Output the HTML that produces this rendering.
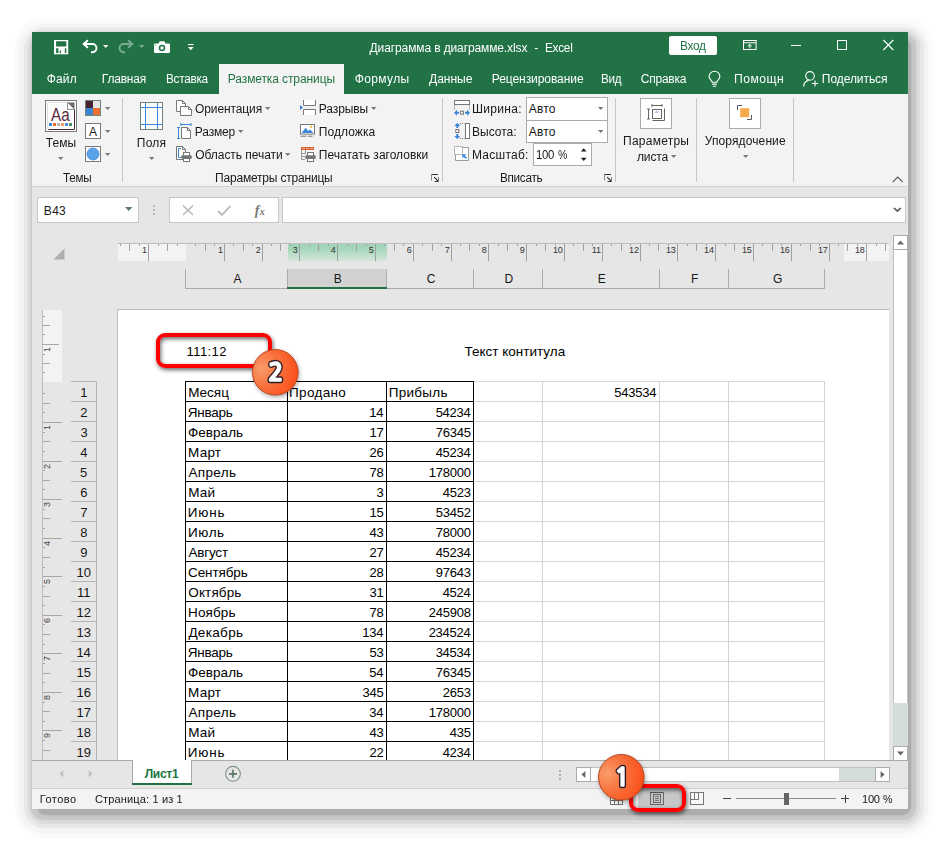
<!DOCTYPE html>
<html lang="ru">
<head>
<meta charset="utf-8">
<title>Диаграмма в диаграмме.xlsx - Excel</title>
<style>
html,body{margin:0;padding:0;background:#fff;}
body{width:940px;height:841px;overflow:hidden;position:relative;font-family:"Liberation Sans",sans-serif;}
#app{position:absolute;left:0;top:0;width:940px;height:841px;overflow:hidden;}
#app div,#app svg,#app span.t{position:absolute;}
#app span.t{white-space:pre;display:block;}
#app svg{overflow:visible;}
#app .layer{left:0;top:0;width:940px;height:841px;}
#app .ui{will-change:transform;}
</style>
</head>
<body>
<div id="app">
<div class="layer">
<div style="left:15px;top:17px;width:918px;height:821px;background:#fbfbfb;border-radius:30px;box-shadow:0 0 2px #fbfbfb;"></div>
<div style="left:19px;top:24px;width:909px;height:809px;background:#f4f4f4;border-radius:25px;box-shadow:0 0 2px #f4f4f4;"></div>
<div style="left:24px;top:28px;width:899.5px;height:800px;background:#e8e8e8;border-radius:21px;box-shadow:0 0 2px #e8e8e8;"></div>
<div style="left:27.5px;top:31px;width:892.0px;height:793px;background:#dcdcdc;border-radius:17px;box-shadow:0 0 2px #dcdcdc;"></div>
<div style="left:31px;top:34px;width:884.5px;height:785.5px;background:#c8c8c8;border-radius:13px;box-shadow:0 0 2px #c8c8c8;"></div>
<div style="left:37px;top:38px;width:874px;height:776.5px;background:#adadad;border-radius:9px;box-shadow:0 0 2px #adadad;"></div>
<div style="left:32px;top:32px;width:876px;height:777px;background:#e6e6e6;"></div>
<div style="left:32px;top:32px;width:876px;height:62px;background:#217346;"></div>
<div style="left:32px;top:94px;width:876px;height:92px;background:#f3f3f3;"></div>
<div style="left:32px;top:186px;width:876px;height:1px;background:#d2d2d2;"></div>
<div style="left:219px;top:64px;width:125px;height:30px;background:#f3f3f3;"></div>
<div style="left:669px;top:36px;width:48px;height:18.5px;background:#fff;border-radius:2px;"></div>
<div style="left:122px;top:98px;width:1px;height:84px;background:#c6c6c6;"></div>
<div style="left:442px;top:98px;width:1px;height:84px;background:#c6c6c6;"></div>
<div style="left:615px;top:98px;width:1px;height:84px;background:#c6c6c6;"></div>
<div style="left:696px;top:98px;width:1px;height:84px;background:#c6c6c6;"></div>
<div style="left:793px;top:98px;width:1px;height:84px;background:#c6c6c6;"></div>
<div style="left:526px;top:97px;width:82px;height:24px;background:#fff;border:1px solid #ababab;box-sizing:border-box;"></div>
<div style="left:526px;top:120px;width:82px;height:23px;background:#fff;border:1px solid #ababab;box-sizing:border-box;"></div>
<div style="left:533px;top:143px;width:59px;height:23px;background:#fff;border:1px solid #ababab;box-sizing:border-box;"></div>
<span class="t" style="left:528.77px;top:99.84px;font:12px/18px &quot;Liberation Sans&quot;, sans-serif;color:#181818;letter-spacing:0.135px;">Авто</span>
<span class="t" style="left:528.77px;top:122.84px;font:12px/18px &quot;Liberation Sans&quot;, sans-serif;color:#181818;letter-spacing:0.135px;">Авто</span>
<div style="left:640px;top:98px;width:32px;height:31px;background:#fff;border:1px solid #ababab;box-sizing:border-box;"></div>
<div style="left:729px;top:98px;width:32px;height:31px;background:#fff;border:1px solid #ababab;box-sizing:border-box;"></div>
<div style="left:37px;top:197px;width:102px;height:26px;background:#fff;border:1px solid #c6c6c6;box-sizing:border-box;"></div>
<span class="t" style="left:43.82px;top:201.84px;font:12px/18px &quot;Liberation Sans&quot;, sans-serif;color:#181818;letter-spacing:0.311px;">B43</span>
<div style="left:169px;top:197px;width:110px;height:26px;background:#fff;border:1px solid #c6c6c6;box-sizing:border-box;"></div>
<div style="left:282px;top:197px;width:624px;height:26px;background:#fff;border:1px solid #c6c6c6;box-sizing:border-box;"></div>
<span class="t" style="left:254.79px;top:199.78px;font:italic bold 14px/21px &quot;Liberation Serif&quot;, serif;color:#777;">f</span>
<span class="t" style="left:259.85px;top:204.12px;font:italic bold 10px/15px &quot;Liberation Serif&quot;, serif;color:#777;">x</span>
<div style="left:118px;top:243px;width:771px;height:1px;background:#bdbdbd;"></div>
<div style="left:118px;top:244px;width:68px;height:17px;background:#f3f3f3;"></div>
<div style="left:844px;top:244px;width:45px;height:17px;background:#f3f3f3;"></div>
<div style="left:288px;top:244px;width:99px;height:17px;background:linear-gradient(#a3d6b9 0%,#a3d6b9 25%,#d6e5dc 100%);"></div>
<div style="left:120px;top:244px;width:1px;height:2px;background:#a0a0a0;"></div>
<div style="left:129px;top:244px;width:1px;height:7px;background:#a0a0a0;"></div>
<div style="left:139px;top:244px;width:1px;height:2px;background:#a0a0a0;"></div>
<div style="left:148px;top:244px;width:1px;height:17px;background:#a0a0a0;"></div>
<div style="left:158px;top:244px;width:1px;height:2px;background:#a0a0a0;"></div>
<div style="left:167px;top:244px;width:1px;height:7px;background:#a0a0a0;"></div>
<div style="left:177px;top:244px;width:1px;height:2px;background:#a0a0a0;"></div>
<div style="left:195px;top:244px;width:1px;height:2px;background:#a0a0a0;"></div>
<div style="left:205px;top:244px;width:1px;height:7px;background:#a0a0a0;"></div>
<div style="left:214px;top:244px;width:1px;height:2px;background:#a0a0a0;"></div>
<div style="left:224px;top:244px;width:1px;height:17px;background:#a0a0a0;"></div>
<div style="left:233px;top:244px;width:1px;height:2px;background:#a0a0a0;"></div>
<div style="left:243px;top:244px;width:1px;height:7px;background:#a0a0a0;"></div>
<div style="left:252px;top:244px;width:1px;height:2px;background:#a0a0a0;"></div>
<div style="left:262px;top:244px;width:1px;height:17px;background:#a0a0a0;"></div>
<div style="left:271px;top:244px;width:1px;height:2px;background:#a0a0a0;"></div>
<div style="left:280px;top:244px;width:1px;height:7px;background:#a0a0a0;"></div>
<div style="left:290px;top:244px;width:1px;height:2px;background:#a0a0a0;"></div>
<div style="left:299px;top:244px;width:1px;height:17px;background:#a0a0a0;"></div>
<div style="left:309px;top:244px;width:1px;height:2px;background:#a0a0a0;"></div>
<div style="left:318px;top:244px;width:1px;height:7px;background:#a0a0a0;"></div>
<div style="left:328px;top:244px;width:1px;height:2px;background:#a0a0a0;"></div>
<div style="left:337px;top:244px;width:1px;height:17px;background:#a0a0a0;"></div>
<div style="left:347px;top:244px;width:1px;height:2px;background:#a0a0a0;"></div>
<div style="left:356px;top:244px;width:1px;height:7px;background:#a0a0a0;"></div>
<div style="left:366px;top:244px;width:1px;height:2px;background:#a0a0a0;"></div>
<div style="left:375px;top:244px;width:1px;height:17px;background:#a0a0a0;"></div>
<div style="left:384px;top:244px;width:1px;height:2px;background:#a0a0a0;"></div>
<div style="left:394px;top:244px;width:1px;height:7px;background:#a0a0a0;"></div>
<div style="left:403px;top:244px;width:1px;height:2px;background:#a0a0a0;"></div>
<div style="left:413px;top:244px;width:1px;height:17px;background:#a0a0a0;"></div>
<div style="left:422px;top:244px;width:1px;height:2px;background:#a0a0a0;"></div>
<div style="left:432px;top:244px;width:1px;height:7px;background:#a0a0a0;"></div>
<div style="left:441px;top:244px;width:1px;height:2px;background:#a0a0a0;"></div>
<div style="left:451px;top:244px;width:1px;height:17px;background:#a0a0a0;"></div>
<div style="left:460px;top:244px;width:1px;height:2px;background:#a0a0a0;"></div>
<div style="left:469px;top:244px;width:1px;height:7px;background:#a0a0a0;"></div>
<div style="left:479px;top:244px;width:1px;height:2px;background:#a0a0a0;"></div>
<div style="left:488px;top:244px;width:1px;height:17px;background:#a0a0a0;"></div>
<div style="left:498px;top:244px;width:1px;height:2px;background:#a0a0a0;"></div>
<div style="left:507px;top:244px;width:1px;height:7px;background:#a0a0a0;"></div>
<div style="left:517px;top:244px;width:1px;height:2px;background:#a0a0a0;"></div>
<div style="left:526px;top:244px;width:1px;height:17px;background:#a0a0a0;"></div>
<div style="left:536px;top:244px;width:1px;height:2px;background:#a0a0a0;"></div>
<div style="left:545px;top:244px;width:1px;height:7px;background:#a0a0a0;"></div>
<div style="left:555px;top:244px;width:1px;height:2px;background:#a0a0a0;"></div>
<div style="left:564px;top:244px;width:1px;height:17px;background:#a0a0a0;"></div>
<div style="left:573px;top:244px;width:1px;height:2px;background:#a0a0a0;"></div>
<div style="left:583px;top:244px;width:1px;height:7px;background:#a0a0a0;"></div>
<div style="left:592px;top:244px;width:1px;height:2px;background:#a0a0a0;"></div>
<div style="left:602px;top:244px;width:1px;height:17px;background:#a0a0a0;"></div>
<div style="left:611px;top:244px;width:1px;height:2px;background:#a0a0a0;"></div>
<div style="left:621px;top:244px;width:1px;height:7px;background:#a0a0a0;"></div>
<div style="left:630px;top:244px;width:1px;height:2px;background:#a0a0a0;"></div>
<div style="left:640px;top:244px;width:1px;height:17px;background:#a0a0a0;"></div>
<div style="left:649px;top:244px;width:1px;height:2px;background:#a0a0a0;"></div>
<div style="left:658px;top:244px;width:1px;height:7px;background:#a0a0a0;"></div>
<div style="left:668px;top:244px;width:1px;height:2px;background:#a0a0a0;"></div>
<div style="left:677px;top:244px;width:1px;height:17px;background:#a0a0a0;"></div>
<div style="left:687px;top:244px;width:1px;height:2px;background:#a0a0a0;"></div>
<div style="left:696px;top:244px;width:1px;height:7px;background:#a0a0a0;"></div>
<div style="left:706px;top:244px;width:1px;height:2px;background:#a0a0a0;"></div>
<div style="left:715px;top:244px;width:1px;height:17px;background:#a0a0a0;"></div>
<div style="left:725px;top:244px;width:1px;height:2px;background:#a0a0a0;"></div>
<div style="left:734px;top:244px;width:1px;height:7px;background:#a0a0a0;"></div>
<div style="left:744px;top:244px;width:1px;height:2px;background:#a0a0a0;"></div>
<div style="left:753px;top:244px;width:1px;height:17px;background:#a0a0a0;"></div>
<div style="left:762px;top:244px;width:1px;height:2px;background:#a0a0a0;"></div>
<div style="left:772px;top:244px;width:1px;height:7px;background:#a0a0a0;"></div>
<div style="left:781px;top:244px;width:1px;height:2px;background:#a0a0a0;"></div>
<div style="left:791px;top:244px;width:1px;height:17px;background:#a0a0a0;"></div>
<div style="left:800px;top:244px;width:1px;height:2px;background:#a0a0a0;"></div>
<div style="left:810px;top:244px;width:1px;height:7px;background:#a0a0a0;"></div>
<div style="left:819px;top:244px;width:1px;height:2px;background:#a0a0a0;"></div>
<div style="left:829px;top:244px;width:1px;height:17px;background:#a0a0a0;"></div>
<div style="left:838px;top:244px;width:1px;height:2px;background:#a0a0a0;"></div>
<div style="left:847px;top:244px;width:1px;height:7px;background:#a0a0a0;"></div>
<div style="left:857px;top:244px;width:1px;height:2px;background:#a0a0a0;"></div>
<div style="left:866px;top:244px;width:1px;height:17px;background:#a0a0a0;"></div>
<div style="left:876px;top:244px;width:1px;height:2px;background:#a0a0a0;"></div>
<div style="left:885px;top:244px;width:1px;height:7px;background:#a0a0a0;"></div>
<span class="t" style="left:141.88px;top:242.88px;font:9px/14px &quot;Liberation Sans&quot;, sans-serif;color:#333;letter-spacing:-0.200px;">1</span>
<span class="t" style="left:217.88px;top:242.88px;font:9px/14px &quot;Liberation Sans&quot;, sans-serif;color:#333;letter-spacing:-0.200px;">1</span>
<span class="t" style="left:255.80px;top:242.88px;font:9px/14px &quot;Liberation Sans&quot;, sans-serif;color:#333;letter-spacing:-0.200px;">2</span>
<span class="t" style="left:292.80px;top:242.88px;font:9px/14px &quot;Liberation Sans&quot;, sans-serif;color:#333;letter-spacing:-0.200px;">3</span>
<span class="t" style="left:330.80px;top:242.88px;font:9px/14px &quot;Liberation Sans&quot;, sans-serif;color:#333;letter-spacing:-0.200px;">4</span>
<span class="t" style="left:368.80px;top:242.88px;font:9px/14px &quot;Liberation Sans&quot;, sans-serif;color:#333;letter-spacing:-0.200px;">5</span>
<span class="t" style="left:406.80px;top:242.88px;font:9px/14px &quot;Liberation Sans&quot;, sans-serif;color:#333;letter-spacing:-0.200px;">6</span>
<span class="t" style="left:444.80px;top:242.88px;font:9px/14px &quot;Liberation Sans&quot;, sans-serif;color:#333;letter-spacing:-0.200px;">7</span>
<span class="t" style="left:481.80px;top:242.88px;font:9px/14px &quot;Liberation Sans&quot;, sans-serif;color:#333;letter-spacing:-0.200px;">8</span>
<span class="t" style="left:519.80px;top:242.88px;font:9px/14px &quot;Liberation Sans&quot;, sans-serif;color:#333;letter-spacing:-0.200px;">9</span>
<span class="t" style="left:552.99px;top:242.88px;font:9px/14px &quot;Liberation Sans&quot;, sans-serif;color:#333;letter-spacing:-0.200px;">10</span>
<span class="t" style="left:591.75px;top:242.88px;font:9px/14px &quot;Liberation Sans&quot;, sans-serif;color:#333;letter-spacing:-0.200px;">11</span>
<span class="t" style="left:629.08px;top:242.88px;font:9px/14px &quot;Liberation Sans&quot;, sans-serif;color:#333;letter-spacing:-0.200px;">12</span>
<span class="t" style="left:665.99px;top:242.88px;font:9px/14px &quot;Liberation Sans&quot;, sans-serif;color:#333;letter-spacing:-0.200px;">13</span>
<span class="t" style="left:704.08px;top:242.88px;font:9px/14px &quot;Liberation Sans&quot;, sans-serif;color:#333;letter-spacing:-0.200px;">14</span>
<span class="t" style="left:741.99px;top:242.88px;font:9px/14px &quot;Liberation Sans&quot;, sans-serif;color:#333;letter-spacing:-0.200px;">15</span>
<span class="t" style="left:779.99px;top:242.88px;font:9px/14px &quot;Liberation Sans&quot;, sans-serif;color:#333;letter-spacing:-0.200px;">16</span>
<span class="t" style="left:817.99px;top:242.88px;font:9px/14px &quot;Liberation Sans&quot;, sans-serif;color:#333;letter-spacing:-0.200px;">17</span>
<span class="t" style="left:854.99px;top:242.88px;font:9px/14px &quot;Liberation Sans&quot;, sans-serif;color:#333;letter-spacing:-0.200px;">18</span>
<div style="left:287px;top:269px;width:100px;height:20px;background:#d2d2d2;"></div>
<div style="left:185px;top:269px;width:1px;height:20px;background:#ababab;"></div>
<div style="left:185px;top:288px;width:102px;height:1px;background:#ababab;"></div>
<span class="t" style="left:233.50px;top:269.84px;font:12px/18px &quot;Liberation Sans&quot;, sans-serif;color:#181818;">A</span>
<div style="left:287px;top:269px;width:1px;height:20px;background:#ababab;"></div>
<span class="t" style="left:333.65px;top:269.84px;font:12px/18px &quot;Liberation Sans&quot;, sans-serif;color:#181818;">B</span>
<div style="left:386px;top:269px;width:1px;height:20px;background:#ababab;"></div>
<div style="left:386px;top:288px;width:87px;height:1px;background:#ababab;"></div>
<span class="t" style="left:426.64px;top:269.84px;font:12px/18px &quot;Liberation Sans&quot;, sans-serif;color:#181818;">C</span>
<div style="left:473px;top:269px;width:1px;height:20px;background:#ababab;"></div>
<div style="left:473px;top:288px;width:69px;height:1px;background:#ababab;"></div>
<span class="t" style="left:504.50px;top:269.84px;font:12px/18px &quot;Liberation Sans&quot;, sans-serif;color:#181818;">D</span>
<div style="left:542px;top:269px;width:1px;height:20px;background:#ababab;"></div>
<div style="left:542px;top:288px;width:117px;height:1px;background:#ababab;"></div>
<span class="t" style="left:597.67px;top:269.84px;font:12px/18px &quot;Liberation Sans&quot;, sans-serif;color:#181818;">E</span>
<div style="left:659px;top:269px;width:1px;height:20px;background:#ababab;"></div>
<div style="left:659px;top:288px;width:69px;height:1px;background:#ababab;"></div>
<span class="t" style="left:691.01px;top:269.84px;font:12px/18px &quot;Liberation Sans&quot;, sans-serif;color:#181818;">F</span>
<div style="left:728px;top:269px;width:1px;height:20px;background:#ababab;"></div>
<div style="left:728px;top:288px;width:96px;height:1px;background:#ababab;"></div>
<span class="t" style="left:773.00px;top:269.84px;font:12px/18px &quot;Liberation Sans&quot;, sans-serif;color:#181818;">G</span>
<div style="left:824px;top:269px;width:1px;height:20px;background:#ababab;"></div>
<div style="left:287px;top:287px;width:100px;height:2px;background:#217346;"></div>
<svg style="left:53px;top:248px;" width="12" height="12" viewBox="0 0 12 12"><path d="M11.5 0.5V11.5H0.5Z" fill="#adadad"/></svg>
<div style="left:117px;top:309px;width:772px;height:452px;background:#fff;border-left:1px solid #bcbcbc;border-top:1px solid #bcbcbc;box-sizing:border-box;"></div>
<div style="left:42px;top:310px;width:20px;height:72px;background:#f3f3f3;"></div>
<div style="left:42px;top:310px;width:1px;height:451px;background:#bdbdbd;"></div>
<div style="left:71px;top:381px;width:26px;height:1px;background:#b4b4b4;"></div>
<span class="t" style="left:80.16px;top:382.50px;font:13px/20px &quot;Liberation Sans&quot;, sans-serif;color:#181818;">1</span>
<div style="left:71px;top:401px;width:26px;height:1px;background:#b4b4b4;"></div>
<span class="t" style="left:80.13px;top:402.50px;font:13px/20px &quot;Liberation Sans&quot;, sans-serif;color:#181818;">2</span>
<div style="left:71px;top:421px;width:26px;height:1px;background:#b4b4b4;"></div>
<span class="t" style="left:80.50px;top:422.50px;font:13px/20px &quot;Liberation Sans&quot;, sans-serif;color:#181818;">3</span>
<div style="left:71px;top:441px;width:26px;height:1px;background:#b4b4b4;"></div>
<span class="t" style="left:80.35px;top:442.50px;font:13px/20px &quot;Liberation Sans&quot;, sans-serif;color:#181818;">4</span>
<div style="left:71px;top:461px;width:26px;height:1px;background:#b4b4b4;"></div>
<span class="t" style="left:80.07px;top:462.50px;font:13px/20px &quot;Liberation Sans&quot;, sans-serif;color:#181818;">5</span>
<div style="left:71px;top:481px;width:26px;height:1px;background:#b4b4b4;"></div>
<span class="t" style="left:80.13px;top:482.50px;font:13px/20px &quot;Liberation Sans&quot;, sans-serif;color:#181818;">6</span>
<div style="left:71px;top:501px;width:26px;height:1px;background:#b4b4b4;"></div>
<span class="t" style="left:80.13px;top:502.50px;font:13px/20px &quot;Liberation Sans&quot;, sans-serif;color:#181818;">7</span>
<div style="left:71px;top:521px;width:26px;height:1px;background:#b4b4b4;"></div>
<span class="t" style="left:80.15px;top:522.50px;font:13px/20px &quot;Liberation Sans&quot;, sans-serif;color:#181818;">8</span>
<div style="left:71px;top:541px;width:26px;height:1px;background:#b4b4b4;"></div>
<span class="t" style="left:80.14px;top:542.50px;font:13px/20px &quot;Liberation Sans&quot;, sans-serif;color:#181818;">9</span>
<div style="left:71px;top:561px;width:26px;height:1px;background:#b4b4b4;"></div>
<span class="t" style="left:76.42px;top:562.50px;font:13px/20px &quot;Liberation Sans&quot;, sans-serif;color:#181818;">10</span>
<div style="left:71px;top:581px;width:26px;height:1px;background:#b4b4b4;"></div>
<span class="t" style="left:76.95px;top:582.50px;font:13px/20px &quot;Liberation Sans&quot;, sans-serif;color:#181818;">11</span>
<div style="left:71px;top:601px;width:26px;height:1px;background:#b4b4b4;"></div>
<span class="t" style="left:76.43px;top:602.50px;font:13px/20px &quot;Liberation Sans&quot;, sans-serif;color:#181818;">12</span>
<div style="left:71px;top:621px;width:26px;height:1px;background:#b4b4b4;"></div>
<span class="t" style="left:76.42px;top:622.50px;font:13px/20px &quot;Liberation Sans&quot;, sans-serif;color:#181818;">13</span>
<div style="left:71px;top:641px;width:26px;height:1px;background:#b4b4b4;"></div>
<span class="t" style="left:76.39px;top:642.50px;font:13px/20px &quot;Liberation Sans&quot;, sans-serif;color:#181818;">14</span>
<div style="left:71px;top:661px;width:26px;height:1px;background:#b4b4b4;"></div>
<span class="t" style="left:76.42px;top:662.50px;font:13px/20px &quot;Liberation Sans&quot;, sans-serif;color:#181818;">15</span>
<div style="left:71px;top:681px;width:26px;height:1px;background:#b4b4b4;"></div>
<span class="t" style="left:76.43px;top:682.50px;font:13px/20px &quot;Liberation Sans&quot;, sans-serif;color:#181818;">16</span>
<div style="left:71px;top:701px;width:26px;height:1px;background:#b4b4b4;"></div>
<span class="t" style="left:76.43px;top:702.50px;font:13px/20px &quot;Liberation Sans&quot;, sans-serif;color:#181818;">17</span>
<div style="left:71px;top:721px;width:26px;height:1px;background:#b4b4b4;"></div>
<span class="t" style="left:76.42px;top:722.50px;font:13px/20px &quot;Liberation Sans&quot;, sans-serif;color:#181818;">18</span>
<div style="left:71px;top:741px;width:26px;height:1px;background:#b4b4b4;"></div>
<span class="t" style="left:76.42px;top:742.50px;font:13px/20px &quot;Liberation Sans&quot;, sans-serif;color:#181818;">19</span>
<div style="left:96px;top:381px;width:1px;height:380px;background:#b4b4b4;"></div>
<div style="left:473px;top:381px;width:352px;height:1px;background:#d4d4d4;"></div>
<div style="left:473px;top:401px;width:352px;height:1px;background:#d4d4d4;"></div>
<div style="left:473px;top:421px;width:352px;height:1px;background:#d4d4d4;"></div>
<div style="left:473px;top:441px;width:352px;height:1px;background:#d4d4d4;"></div>
<div style="left:473px;top:461px;width:352px;height:1px;background:#d4d4d4;"></div>
<div style="left:473px;top:481px;width:352px;height:1px;background:#d4d4d4;"></div>
<div style="left:473px;top:501px;width:352px;height:1px;background:#d4d4d4;"></div>
<div style="left:473px;top:521px;width:352px;height:1px;background:#d4d4d4;"></div>
<div style="left:473px;top:541px;width:352px;height:1px;background:#d4d4d4;"></div>
<div style="left:473px;top:561px;width:352px;height:1px;background:#d4d4d4;"></div>
<div style="left:473px;top:581px;width:352px;height:1px;background:#d4d4d4;"></div>
<div style="left:473px;top:601px;width:352px;height:1px;background:#d4d4d4;"></div>
<div style="left:473px;top:621px;width:352px;height:1px;background:#d4d4d4;"></div>
<div style="left:473px;top:641px;width:352px;height:1px;background:#d4d4d4;"></div>
<div style="left:473px;top:661px;width:352px;height:1px;background:#d4d4d4;"></div>
<div style="left:473px;top:681px;width:352px;height:1px;background:#d4d4d4;"></div>
<div style="left:473px;top:701px;width:352px;height:1px;background:#d4d4d4;"></div>
<div style="left:473px;top:721px;width:352px;height:1px;background:#d4d4d4;"></div>
<div style="left:473px;top:741px;width:352px;height:1px;background:#d4d4d4;"></div>
<div style="left:542px;top:381px;width:1px;height:380px;background:#d4d4d4;"></div>
<div style="left:659px;top:381px;width:1px;height:380px;background:#d4d4d4;"></div>
<div style="left:728px;top:381px;width:1px;height:380px;background:#d4d4d4;"></div>
<div style="left:824px;top:381px;width:1px;height:380px;background:#d4d4d4;"></div>
<div style="left:185px;top:381px;width:289px;height:1px;background:#000;"></div>
<div style="left:185px;top:401px;width:289px;height:1px;background:#000;"></div>
<div style="left:185px;top:421px;width:289px;height:1px;background:#000;"></div>
<div style="left:185px;top:441px;width:289px;height:1px;background:#000;"></div>
<div style="left:185px;top:461px;width:289px;height:1px;background:#000;"></div>
<div style="left:185px;top:481px;width:289px;height:1px;background:#000;"></div>
<div style="left:185px;top:501px;width:289px;height:1px;background:#000;"></div>
<div style="left:185px;top:521px;width:289px;height:1px;background:#000;"></div>
<div style="left:185px;top:541px;width:289px;height:1px;background:#000;"></div>
<div style="left:185px;top:561px;width:289px;height:1px;background:#000;"></div>
<div style="left:185px;top:581px;width:289px;height:1px;background:#000;"></div>
<div style="left:185px;top:601px;width:289px;height:1px;background:#000;"></div>
<div style="left:185px;top:621px;width:289px;height:1px;background:#000;"></div>
<div style="left:185px;top:641px;width:289px;height:1px;background:#000;"></div>
<div style="left:185px;top:661px;width:289px;height:1px;background:#000;"></div>
<div style="left:185px;top:681px;width:289px;height:1px;background:#000;"></div>
<div style="left:185px;top:701px;width:289px;height:1px;background:#000;"></div>
<div style="left:185px;top:721px;width:289px;height:1px;background:#000;"></div>
<div style="left:185px;top:741px;width:289px;height:1px;background:#000;"></div>
<div style="left:185px;top:381px;width:1px;height:380px;background:#000;"></div>
<div style="left:287px;top:381px;width:1px;height:380px;background:#000;"></div>
<div style="left:386px;top:381px;width:1px;height:380px;background:#000;"></div>
<div style="left:473px;top:381px;width:1px;height:380px;background:#000;"></div>
<span class="t" style="left:188.13px;top:383.32px;font:13.5px/20px &quot;Liberation Sans&quot;, sans-serif;color:#000;letter-spacing:0.019px;">Месяц</span>
<span class="t" style="left:289.09px;top:383.32px;font:13.5px/20px &quot;Liberation Sans&quot;, sans-serif;color:#000;letter-spacing:0.314px;">Продано</span>
<span class="t" style="left:388.66px;top:383.32px;font:13.5px/20px &quot;Liberation Sans&quot;, sans-serif;color:#000;letter-spacing:0.289px;">Прибыль</span>
<span class="t" style="left:187.83px;top:403.32px;font:13.5px/20px &quot;Liberation Sans&quot;, sans-serif;color:#000;letter-spacing:-0.275px;">Январь</span>
<span class="t" style="left:369.19px;top:402.50px;font:13px/20px &quot;Liberation Sans&quot;, sans-serif;color:#000;letter-spacing:-0.230px;">14</span>
<span class="t" style="left:435.64px;top:402.50px;font:13px/20px &quot;Liberation Sans&quot;, sans-serif;color:#000;letter-spacing:-0.230px;">54234</span>
<span class="t" style="left:187.98px;top:423.32px;font:13.5px/20px &quot;Liberation Sans&quot;, sans-serif;color:#000;letter-spacing:0.049px;">Февраль</span>
<span class="t" style="left:369.50px;top:422.50px;font:13px/20px &quot;Liberation Sans&quot;, sans-serif;color:#000;letter-spacing:-0.230px;">17</span>
<span class="t" style="left:435.80px;top:422.50px;font:13px/20px &quot;Liberation Sans&quot;, sans-serif;color:#000;letter-spacing:-0.230px;">76345</span>
<span class="t" style="left:188.12px;top:443.32px;font:13.5px/20px &quot;Liberation Sans&quot;, sans-serif;color:#000;letter-spacing:0.210px;">Март</span>
<span class="t" style="left:369.50px;top:442.50px;font:13px/20px &quot;Liberation Sans&quot;, sans-serif;color:#000;letter-spacing:-0.230px;">26</span>
<span class="t" style="left:435.64px;top:442.50px;font:13px/20px &quot;Liberation Sans&quot;, sans-serif;color:#000;letter-spacing:-0.230px;">45234</span>
<span class="t" style="left:188.41px;top:463.32px;font:13.5px/20px &quot;Liberation Sans&quot;, sans-serif;color:#000;letter-spacing:0.374px;">Апрель</span>
<span class="t" style="left:369.50px;top:462.50px;font:13px/20px &quot;Liberation Sans&quot;, sans-serif;color:#000;letter-spacing:-0.230px;">78</span>
<span class="t" style="left:428.80px;top:462.50px;font:13px/20px &quot;Liberation Sans&quot;, sans-serif;color:#000;letter-spacing:-0.230px;">178000</span>
<span class="t" style="left:188.16px;top:483.32px;font:13.5px/20px &quot;Liberation Sans&quot;, sans-serif;color:#000;letter-spacing:0.254px;">Май</span>
<span class="t" style="left:376.50px;top:482.50px;font:13px/20px &quot;Liberation Sans&quot;, sans-serif;color:#000;letter-spacing:-0.230px;">3</span>
<span class="t" style="left:442.80px;top:482.50px;font:13px/20px &quot;Liberation Sans&quot;, sans-serif;color:#000;letter-spacing:-0.230px;">4523</span>
<span class="t" style="left:187.69px;top:503.32px;font:13.5px/20px &quot;Liberation Sans&quot;, sans-serif;color:#000;letter-spacing:0.832px;">Июнь</span>
<span class="t" style="left:369.50px;top:502.50px;font:13px/20px &quot;Liberation Sans&quot;, sans-serif;color:#000;letter-spacing:-0.230px;">15</span>
<span class="t" style="left:435.80px;top:502.50px;font:13px/20px &quot;Liberation Sans&quot;, sans-serif;color:#000;letter-spacing:-0.230px;">53452</span>
<span class="t" style="left:188.12px;top:523.32px;font:13.5px/20px &quot;Liberation Sans&quot;, sans-serif;color:#000;letter-spacing:0.522px;">Июль</span>
<span class="t" style="left:369.50px;top:522.50px;font:13px/20px &quot;Liberation Sans&quot;, sans-serif;color:#000;letter-spacing:-0.230px;">43</span>
<span class="t" style="left:435.80px;top:522.50px;font:13px/20px &quot;Liberation Sans&quot;, sans-serif;color:#000;letter-spacing:-0.230px;">78000</span>
<span class="t" style="left:188.50px;top:543.32px;font:13.5px/20px &quot;Liberation Sans&quot;, sans-serif;color:#000;letter-spacing:-0.214px;">Август</span>
<span class="t" style="left:369.50px;top:542.50px;font:13px/20px &quot;Liberation Sans&quot;, sans-serif;color:#000;letter-spacing:-0.230px;">27</span>
<span class="t" style="left:435.64px;top:542.50px;font:13px/20px &quot;Liberation Sans&quot;, sans-serif;color:#000;letter-spacing:-0.230px;">45234</span>
<span class="t" style="left:187.99px;top:563.32px;font:13.5px/20px &quot;Liberation Sans&quot;, sans-serif;color:#000;letter-spacing:-0.093px;">Сентябрь</span>
<span class="t" style="left:369.50px;top:562.50px;font:13px/20px &quot;Liberation Sans&quot;, sans-serif;color:#000;letter-spacing:-0.230px;">28</span>
<span class="t" style="left:435.80px;top:562.50px;font:13px/20px &quot;Liberation Sans&quot;, sans-serif;color:#000;letter-spacing:-0.230px;">97643</span>
<span class="t" style="left:188.37px;top:583.32px;font:13.5px/20px &quot;Liberation Sans&quot;, sans-serif;color:#000;letter-spacing:0.100px;">Октябрь</span>
<span class="t" style="left:369.50px;top:582.50px;font:13px/20px &quot;Liberation Sans&quot;, sans-serif;color:#000;letter-spacing:-0.230px;">31</span>
<span class="t" style="left:442.64px;top:582.50px;font:13px/20px &quot;Liberation Sans&quot;, sans-serif;color:#000;letter-spacing:-0.230px;">4524</span>
<span class="t" style="left:188.12px;top:603.32px;font:13.5px/20px &quot;Liberation Sans&quot;, sans-serif;color:#000;letter-spacing:0.107px;">Ноябрь</span>
<span class="t" style="left:369.50px;top:602.50px;font:13px/20px &quot;Liberation Sans&quot;, sans-serif;color:#000;letter-spacing:-0.230px;">78</span>
<span class="t" style="left:428.80px;top:602.50px;font:13px/20px &quot;Liberation Sans&quot;, sans-serif;color:#000;letter-spacing:-0.230px;">245908</span>
<span class="t" style="left:188.39px;top:623.32px;font:13.5px/20px &quot;Liberation Sans&quot;, sans-serif;color:#000;letter-spacing:0.332px;">Декабрь</span>
<span class="t" style="left:362.19px;top:622.50px;font:13px/20px &quot;Liberation Sans&quot;, sans-serif;color:#000;letter-spacing:-0.230px;">134</span>
<span class="t" style="left:428.64px;top:622.50px;font:13px/20px &quot;Liberation Sans&quot;, sans-serif;color:#000;letter-spacing:-0.230px;">234524</span>
<span class="t" style="left:187.83px;top:643.32px;font:13.5px/20px &quot;Liberation Sans&quot;, sans-serif;color:#000;letter-spacing:-0.275px;">Январь</span>
<span class="t" style="left:369.50px;top:642.50px;font:13px/20px &quot;Liberation Sans&quot;, sans-serif;color:#000;letter-spacing:-0.230px;">53</span>
<span class="t" style="left:435.64px;top:642.50px;font:13px/20px &quot;Liberation Sans&quot;, sans-serif;color:#000;letter-spacing:-0.230px;">34534</span>
<span class="t" style="left:187.98px;top:663.32px;font:13.5px/20px &quot;Liberation Sans&quot;, sans-serif;color:#000;letter-spacing:0.049px;">Февраль</span>
<span class="t" style="left:369.19px;top:662.50px;font:13px/20px &quot;Liberation Sans&quot;, sans-serif;color:#000;letter-spacing:-0.230px;">54</span>
<span class="t" style="left:435.80px;top:662.50px;font:13px/20px &quot;Liberation Sans&quot;, sans-serif;color:#000;letter-spacing:-0.230px;">76345</span>
<span class="t" style="left:188.12px;top:683.32px;font:13.5px/20px &quot;Liberation Sans&quot;, sans-serif;color:#000;letter-spacing:0.210px;">Март</span>
<span class="t" style="left:362.50px;top:682.50px;font:13px/20px &quot;Liberation Sans&quot;, sans-serif;color:#000;letter-spacing:-0.230px;">345</span>
<span class="t" style="left:442.80px;top:682.50px;font:13px/20px &quot;Liberation Sans&quot;, sans-serif;color:#000;letter-spacing:-0.230px;">2653</span>
<span class="t" style="left:188.41px;top:703.32px;font:13.5px/20px &quot;Liberation Sans&quot;, sans-serif;color:#000;letter-spacing:0.374px;">Апрель</span>
<span class="t" style="left:369.19px;top:702.50px;font:13px/20px &quot;Liberation Sans&quot;, sans-serif;color:#000;letter-spacing:-0.230px;">34</span>
<span class="t" style="left:428.80px;top:702.50px;font:13px/20px &quot;Liberation Sans&quot;, sans-serif;color:#000;letter-spacing:-0.230px;">178000</span>
<span class="t" style="left:188.16px;top:723.32px;font:13.5px/20px &quot;Liberation Sans&quot;, sans-serif;color:#000;letter-spacing:0.254px;">Май</span>
<span class="t" style="left:369.50px;top:722.50px;font:13px/20px &quot;Liberation Sans&quot;, sans-serif;color:#000;letter-spacing:-0.230px;">43</span>
<span class="t" style="left:449.80px;top:722.50px;font:13px/20px &quot;Liberation Sans&quot;, sans-serif;color:#000;letter-spacing:-0.230px;">435</span>
<span class="t" style="left:187.69px;top:743.32px;font:13.5px/20px &quot;Liberation Sans&quot;, sans-serif;color:#000;letter-spacing:0.832px;">Июнь</span>
<span class="t" style="left:369.50px;top:742.50px;font:13px/20px &quot;Liberation Sans&quot;, sans-serif;color:#000;letter-spacing:-0.230px;">22</span>
<span class="t" style="left:442.64px;top:742.50px;font:13px/20px &quot;Liberation Sans&quot;, sans-serif;color:#000;letter-spacing:-0.230px;">4234</span>
<span class="t" style="left:614.34px;top:382.50px;font:13px/20px &quot;Liberation Sans&quot;, sans-serif;color:#000;letter-spacing:-0.230px;">543534</span>
<span class="t" style="left:186.53px;top:341.50px;font:13px/20px &quot;Liberation Sans&quot;, sans-serif;color:#000;letter-spacing:0.431px;">111:12</span>
<span class="t" style="left:464.40px;top:342.32px;font:13.5px/20px &quot;Liberation Sans&quot;, sans-serif;color:#000;letter-spacing:0.007px;">Текст контитула</span>
<div style="left:32px;top:760px;width:861px;height:1px;background:#ababab;"></div>
<div style="left:32px;top:761px;width:876px;height:27px;background:#e6e6e6;"></div>
<div style="left:132px;top:760px;width:60px;height:25px;background:#fff;border-left:1px solid #ababab;border-right:1px solid #ababab;box-sizing:border-box;"></div>
<div style="left:132px;top:783px;width:60px;height:2px;background:#217346;"></div>
<span class="t" style="left:144.67px;top:764.84px;font:bold 12px/18px &quot;Liberation Sans&quot;, sans-serif;color:#217346;letter-spacing:-0.252px;">Лист1</span>
<div style="left:32px;top:788px;width:876px;height:21px;background:#f3f3f3;"></div>
<div style="left:32px;top:788px;width:876px;height:1px;background:#d0d0d0;"></div>
<div style="left:893px;top:235px;width:15px;height:526px;background:#fff;border:1px solid #c0c0c0;box-sizing:border-box;"></div>
<div style="left:893px;top:703px;width:15px;height:44px;background:#d5ddd8;"></div>
<div style="left:893px;top:235px;width:15px;height:15px;background:#fff;border:1px solid #ababab;box-sizing:border-box;"></div>
<div style="left:893px;top:746px;width:15px;height:15px;background:#fff;border:1px solid #ababab;box-sizing:border-box;"></div>
<div style="left:576px;top:767px;width:314px;height:15px;background:#fff;border:1px solid #c0c0c0;box-sizing:border-box;"></div>
<div style="left:839px;top:768px;width:37px;height:13px;background:#d5ddd8;"></div>
<div style="left:576px;top:767px;width:15px;height:15px;background:#fff;border:1px solid #ababab;box-sizing:border-box;"></div>
<div style="left:875px;top:767px;width:15px;height:15px;background:#fff;border:1px solid #ababab;box-sizing:border-box;"></div>
<svg style="left:54px;top:40px;" width="14" height="14" viewBox="0 0 14 14"><path fill-rule="evenodd" fill="#fff" d="M0 0H14.2V14.2H0Z M2.1 1.3V6.5H12.3V1.3Z M2.1 8.3V12.9H4.4V8.3Z M10.8 8.3V12.9H12.3V8.3Z M5.7 10.4V12.9H7.1V10.4Z"/></svg>
<svg style="left:82px;top:40px;" width="16" height="14" viewBox="0 0 16 14"><path d="M2 4.0H10.4A4.1 4.1 0 0 1 10.4 12.2H9" fill="none" stroke="#fff" stroke-width="1.9"/>
<path d="M5.9 0.3L1.7 4.0L5.9 7.7" fill="none" stroke="#fff" stroke-width="2" stroke-linejoin="miter"/></svg>
<svg style="left:103px;top:45px;" width="5.4" height="3.1" viewBox="0 0 5.4 3.1"><path d="M0 0H5.4L2.7 3.1Z" fill="#fff"/></svg>
<svg style="left:118px;top:40px;" width="16" height="14" viewBox="0 0 16 14"><g opacity=".4"><path d="M14 4.0H5.6A4.1 4.1 0 0 0 5.6 12.2H7" fill="none" stroke="#fff" stroke-width="1.9"/>
<path d="M10.1 0.3L14.3 4.0L10.1 7.7" fill="none" stroke="#fff" stroke-width="2" stroke-linejoin="miter"/></g></svg>
<svg style="left:139px;top:45px;" width="5.4" height="3.1" viewBox="0 0 5.4 3.1"><path d="M0 0H5.4L2.7 3.1Z" fill="rgba(255,255,255,.4)"/></svg>
<svg style="left:154px;top:41px;" width="16" height="12" viewBox="0 0 16 12"><path d="M1.2 2.4H4.6L5.8 0.2H10.4L11.6 2.4H14.8Q16 2.4 16 3.6V10.8Q16 12 14.8 12H1.2Q0 12 0 10.8V3.6Q0 2.4 1.2 2.4Z" fill="#fff"/>
<circle cx="8" cy="6.9" r="3.25" fill="#217346"/><rect x="6.5" y="5.4" width="3" height="3" rx=".4" fill="#fff"/>
<circle cx="1.9" cy="4.1" r=".6" fill="#217346"/></svg>
<svg style="left:188px;top:44px;" width="6" height="7" viewBox="0 0 6 7"><rect x="0" y="0" width="5.6" height="1.1" fill="#fff"/><path d="M0 3H5.6L2.8 6.3Z" fill="#fff"/></svg>
<svg style="left:743px;top:40px;" width="14" height="10" viewBox="0 0 14 10"><rect x=".5" y=".5" width="12.6" height="9" fill="none" stroke="#fff" stroke-width="1"/>
<path d="M.5 2.8H13" stroke="#fff" stroke-width="1"/><path d="M6.8 8.4V4.6M4.8 6.3L6.8 4.4L8.8 6.3" fill="none" stroke="#fff" stroke-width="1"/></svg>
<div style="left:791px;top:45px;width:10px;height:1px;background:#fff;"></div>
<div style="left:837px;top:40px;width:10px;height:10px;border:1px solid #fff;box-sizing:border-box;"></div>
<svg style="left:883px;top:40px;" width="11" height="10" viewBox="0 0 11 10"><path d="M0.3 0L10.3 10M10.3 0L0.3 10" stroke="#fff" stroke-width="1.1"/></svg>
<svg style="left:708px;top:71px;" width="13" height="16" viewBox="0 0 13 16"><path d="M4.2 11.2C4.2 9.4 1.1 8.6 1.1 5.6A5.4 5.4 0 0 1 11.9 5.6C11.9 8.6 8.8 9.4 8.8 11.2Z" fill="none" stroke="#fff" stroke-width="1.1"/>
<path d="M4.2 13.1H8.8M4.9 15.2H8.1" stroke="#fff" stroke-width="1.1"/></svg>
<svg style="left:803px;top:71px;" width="16" height="16" viewBox="0 0 16 16"><circle cx="7" cy="4.9" r="4.3" fill="none" stroke="#fff" stroke-width="1.1"/>
<path d="M0.6 15.6C0.9 12.2 3 9.9 5.6 9.4" fill="none" stroke="#fff" stroke-width="1.1"/>
<path d="M12 9.4V15.6M8.9 12.5H15.1" stroke="#fff" stroke-width="1.1"/></svg>
<div style="left:45px;top:100px;width:32px;height:32px;background:#fff;border:1px solid #7a7a7a;box-sizing:border-box;"></div>
<svg style="left:47px;top:102px;" width="28" height="28" viewBox="0 0 28 28"><path d="M.5 .5H20.5L27.5 7.5V27.5H.5Z" fill="#fff" stroke="#e0e0e0" stroke-width="1"/>
<path d="M27.5 7.5V27.5H1.5" fill="none" stroke="#4e2a33" stroke-width="1"/>
<path d="M20.5 .5H27.5V7.5Z" fill="#6a6a6a"/><path d="M20.5 .5V7.5H27.5" fill="none" stroke="#8a8a8a" stroke-width="1"/>
<rect x="2" y="21" width="3" height="3" fill="#3b86d1"/><rect x="6" y="21" width="3" height="3" fill="#ef6a2a"/><rect x="10" y="21" width="3" height="3" fill="#b3b3b3"/>
<rect x="14" y="21" width="3" height="3" fill="#f6a05f"/><rect x="18" y="21" width="3" height="3" fill="#4a92da"/><rect x="22" y="21" width="3" height="3" fill="#4d9064"/></svg>
<span class="t" style="left:51.10px;top:102.24px;font:17.5px/26px &quot;Liberation Sans&quot;, sans-serif;color:#5a2b3a;transform:scaleX(0.87);transform-origin:0 0;">Aa</span>
<svg style="left:58px;top:157px;" width="5.4" height="3.1" viewBox="0 0 5.4 3.1"><path d="M0 0H5.4L2.7 3.1Z" fill="#777"/></svg>
<div style="left:85px;top:100px;width:16px;height:16px;background:#e6e6e6;border:1px solid #6d8579;box-sizing:border-box;"></div>
<div style="left:86px;top:101px;width:7px;height:7px;background:#4a2230;"></div>
<div style="left:86px;top:108px;width:7px;height:7px;background:#3b86d1;"></div>
<div style="left:93px;top:108px;width:7px;height:7px;background:#f0702f;"></div>
<svg style="left:105px;top:107px;" width="5.4" height="3.1" viewBox="0 0 5.4 3.1"><path d="M0 0H5.4L2.7 3.1Z" fill="#777"/></svg>
<div style="left:85px;top:123px;width:16px;height:16px;background:#fff;border:1px solid #7a7a7a;box-sizing:border-box;"></div>
<span class="t" style="left:89.00px;top:122.84px;font:12px/18px &quot;Liberation Sans&quot;, sans-serif;color:#1a1a1a;">A</span>
<svg style="left:105px;top:130px;" width="5.4" height="3.1" viewBox="0 0 5.4 3.1"><path d="M0 0H5.4L2.7 3.1Z" fill="#777"/></svg>
<div style="left:85px;top:146px;width:16px;height:16px;background:#fff;border:1px solid #7a7a7a;box-sizing:border-box;"></div>
<svg style="left:85px;top:146px;" width="16" height="16" viewBox="0 0 16 16"><circle cx="8" cy="8" r="6" fill="#5aa2ea" stroke="#3f86d2" stroke-width=".8"/></svg>
<svg style="left:105px;top:153px;" width="5.4" height="3.1" viewBox="0 0 5.4 3.1"><path d="M0 0H5.4L2.7 3.1Z" fill="#777"/></svg>
<div style="left:140px;top:102px;width:23px;height:28px;background:#fff;border:1px solid #6f8577;box-sizing:border-box;"></div>
<div style="left:145px;top:103px;width:1px;height:26px;background:#3b86d8;"></div>
<div style="left:157px;top:103px;width:1px;height:26px;background:#3b86d8;"></div>
<div style="left:141px;top:107px;width:21px;height:1px;background:#3b86d8;"></div>
<div style="left:141px;top:124px;width:21px;height:1px;background:#3b86d8;"></div>
<svg style="left:149px;top:157px;" width="5.4" height="3.1" viewBox="0 0 5.4 3.1"><path d="M0 0H5.4L2.7 3.1Z" fill="#777"/></svg>
<svg style="left:176px;top:100px;" width="16" height="16" viewBox="0 0 16 16"><path d="M.5 .5H6.5L9.5 3.5V11.5H.5Z" fill="#fff" stroke="#777"/><path d="M6.5 .5V3.5H9.5" fill="none" stroke="#777"/>
<path d="M4.5 6.5H12.5L15.5 9.5V15.5H4.5Z" fill="#fff" stroke="#777"/><path d="M12.5 6.5V9.5H15.5" fill="none" stroke="#777"/></svg>
<svg style="left:265px;top:107px;" width="5.4" height="3.1" viewBox="0 0 5.4 3.1"><path d="M0 0H5.4L2.7 3.1Z" fill="#777"/></svg>
<svg style="left:178px;top:124px;" width="14" height="15" viewBox="0 0 14 15"><path d="M3 .5H13M3 -1V2M13 -1V2" stroke="#3b86d8" fill="none"/><path d="M.5 3.5V14.5M-1 3.5H2M-1 14.5H2" stroke="#3b86d8" fill="none"/>
<path d="M3.5 3.5H9.5L12.5 6.5V14.5H3.5Z" fill="#fff" stroke="#777"/><path d="M9.5 3.5V6.5H12.5" fill="none" stroke="#777"/></svg>
<svg style="left:238px;top:130px;" width="5.4" height="3.1" viewBox="0 0 5.4 3.1"><path d="M0 0H5.4L2.7 3.1Z" fill="#777"/></svg>
<svg style="left:176px;top:146px;" width="16" height="16" viewBox="0 0 16 16"><path d="M.5 .5H6.5L9.5 3.5V13.5H.5Z" fill="#fff" stroke="#777"/><path d="M6.5 .5V3.5H9.5" fill="none" stroke="#777"/>
<path d="M5 2.5H2.5V11.5H5" fill="none" stroke="#3b86d8"/>
<rect x="7.5" y="6.5" width="6" height="4" fill="#fff" stroke="#777"/><rect x="5.3" y="9.3" width="10.4" height="3.6" rx="1" fill="#757575"/>
<rect x="7.5" y="12.5" width="6" height="3" fill="#fff" stroke="#777"/></svg>
<svg style="left:285px;top:153px;" width="5.4" height="3.1" viewBox="0 0 5.4 3.1"><path d="M0 0H5.4L2.7 3.1Z" fill="#777"/></svg>
<svg style="left:300px;top:100px;" width="16" height="15" viewBox="0 0 16 15"><path d="M3.5 0V5.5H15.5V0" fill="#fff" stroke="#777"/><path d="M3.5 15V9.5H15.5V15" fill="#fff" stroke="#777"/>
<path d="M0 5L3 7.5L0 10Z" fill="#3b86d8"/></svg>
<svg style="left:371px;top:107px;" width="5.4" height="3.1" viewBox="0 0 5.4 3.1"><path d="M0 0H5.4L2.7 3.1Z" fill="#777"/></svg>
<svg style="left:300px;top:124px;" width="15" height="13" viewBox="0 0 15 13"><rect x=".5" y=".5" width="14" height="9.6" fill="#fff" stroke="#777"/>
<path d="M1.5 9L5.6 3.8L8.2 7L10 5.4L13.6 9Z" fill="#3b86d8"/><circle cx="11.2" cy="2.8" r="1.3" fill="#f7c64f"/>
<path d="M.5 12.2H6.5M8 12.2H12.5" stroke="#777"/></svg>
<svg style="left:301px;top:147px;" width="15" height="15" viewBox="0 0 15 15"><rect x="0" y="0" width="13" height="3" fill="#d5622f"/><path d="M1 1.5H4M5 1.5H8M9 1.5H12" stroke="#f3b79a" stroke-width=".8"/>
<path d="M.5 3V12.5H4M.5 6.5H5M.5 9.5H4M4.5 3V7" fill="none" stroke="#9a9a9a"/>
<rect x="6.5" y="5.5" width="6" height="4" fill="#fff" stroke="#777"/><rect x="4.3" y="8.3" width="10.4" height="3.8" rx="1" fill="#757575"/>
<rect x="6.5" y="11.5" width="6" height="3" fill="#fff" stroke="#777"/></svg>
<svg style="left:431px;top:174px;" width="8" height="8" viewBox="0 0 8 8"><path d="M.5 6.6V.5" fill="none" stroke="#8a8a8a"/><path d="M.5 .5H7" fill="none" stroke="#333"/><path d="M3.2 3.2L7.2 7.2" fill="none" stroke="#222" stroke-width="1.1"/><path d="M7.5 3.2V7.5" fill="none" stroke="#777"/><path d="M7.5 7.5H3.6" fill="none" stroke="#333"/></svg>
<svg style="left:604px;top:174px;" width="8" height="8" viewBox="0 0 8 8"><path d="M.5 6.6V.5" fill="none" stroke="#8a8a8a"/><path d="M.5 .5H7" fill="none" stroke="#333"/><path d="M3.2 3.2L7.2 7.2" fill="none" stroke="#222" stroke-width="1.1"/><path d="M7.5 3.2V7.5" fill="none" stroke="#777"/><path d="M7.5 7.5H3.6" fill="none" stroke="#333"/></svg>
<svg style="left:454px;top:100px;" width="16" height="16" viewBox="0 0 16 16"><rect x=".5" y=".5" width="15" height="4" fill="#fff" stroke="#777"/>
<path d="M.5 5.5V10M15.5 5.5V10" stroke="#777" stroke-dasharray="1 1"/>
<path d="M0 12.7L3 9.7V11.7H5V13.7H3V15.7Z" fill="#3b86d8"/><path d="M16 12.7L13 9.7V11.7H11V13.7H13V15.7Z" fill="#3b86d8"/>
<rect x="6.5" y="11.2" width="3" height="3" fill="#fff" stroke="#777"/></svg>
<svg style="left:454px;top:123px;" width="16" height="16" viewBox="0 0 16 16"><rect x="11.5" y=".5" width="4" height="15" fill="#fff" stroke="#777"/>
<path d="M6 .5H10.5M6 15.5H10.5" stroke="#777" stroke-dasharray="1 1"/>
<path d="M3.3 0L.3 3H2.3V5H4.3V3H6.3Z" fill="#3b86d8"/><path d="M3.3 16L.3 13H2.3V11H4.3V13H6.3Z" fill="#3b86d8"/>
<rect x="1.8" y="6.5" width="3" height="3" fill="#fff" stroke="#777"/></svg>
<svg style="left:454px;top:146px;" width="16" height="16" viewBox="0 0 16 16"><path d="M1.5 8.5V14.5H14.5V1.5H8.5" fill="#fff" stroke="#9a9a9a"/>
<rect x=".5" y=".5" width="8" height="8" fill="#fff" stroke="#777" stroke-dasharray="1 1"/>
<path d="M8.3 8.3H12.3L10.9 9.7L13 11.8L11.8 13L9.7 10.9L8.3 12.3Z" fill="#3b86d8"/></svg>
<svg style="left:597.5px;top:107px;" width="5.4" height="3.1" viewBox="0 0 5.4 3.1"><path d="M0 0H5.4L2.7 3.1Z" fill="#777"/></svg>
<svg style="left:597.5px;top:130px;" width="5.4" height="3.1" viewBox="0 0 5.4 3.1"><path d="M0 0H5.4L2.7 3.1Z" fill="#777"/></svg>
<svg style="left:581px;top:148px;" width="6" height="13" viewBox="0 0 6 13"><path d="M-.2 3.4H5.6L2.7 .2Z" fill="#1e1e1e"/><path d="M-.2 9.7H5.6L2.7 12.9Z" fill="#1e1e1e"/></svg>
<svg style="left:648px;top:105px;" width="17" height="16" viewBox="0 0 17 16"><path d="M4 .5H14M4 -1V2M14 -1V2" stroke="#666" fill="none"/><path d="M.5 4V14M-1 4H2M-1 14H2" stroke="#666" fill="none"/>
<path d="M4.5 15.5H16.5V3.5" fill="none" stroke="#666"/><rect x="4.5" y="4.5" width="9" height="9" fill="#fff" stroke="#666"/>
<path d="M7 7.5L8 6.5L9.5 7.5L10.5 6.5" fill="none" stroke="#3b86d8" stroke-width=".9"/></svg>
<svg style="left:671px;top:154.5px;" width="5.4" height="3.1" viewBox="0 0 5.4 3.1"><path d="M0 0H5.4L2.7 3.1Z" fill="#777"/></svg>
<svg style="left:737px;top:105px;" width="16" height="16" viewBox="0 0 16 16"><rect x="3.2" y="3.2" width="9" height="9" fill="#f8a94e"/>
<path d="M.5 5V.5H5" fill="none" stroke="#5a5a5a"/><path d="M14.5 10V14.5H10" fill="none" stroke="#5a5a5a"/></svg>
<svg style="left:743px;top:154.5px;" width="5.4" height="3.1" viewBox="0 0 5.4 3.1"><path d="M0 0H5.4L2.7 3.1Z" fill="#777"/></svg>
<svg style="left:892px;top:176px;" width="12" height="7" viewBox="0 0 12 7"><path d="M.7 6.2L5.7 1L10.7 6.2" fill="none" stroke="#555" stroke-width="1.1"/></svg>
<svg style="left:125px;top:207px;" width="7.5" height="4" viewBox="0 0 7.5 4"><path d="M0 0H7.5L3.75 4Z" fill="#5a7a68"/></svg>
<div style="left:153px;top:205px;width:2px;height:2px;background:#b9b9b9;"></div>
<div style="left:153px;top:209px;width:2px;height:2px;background:#b9b9b9;"></div>
<div style="left:153px;top:213px;width:2px;height:2px;background:#b9b9b9;"></div>
<svg style="left:182px;top:205px;" width="12" height="11" viewBox="0 0 12 11"><path d="M1 .7L11 10M11 .7L1 10" stroke="#bdbdbd" stroke-width="1.7" fill="none"/></svg>
<svg style="left:217px;top:205px;" width="15" height="11" viewBox="0 0 15 11"><path d="M1 6L5 9.8L13.6 .8" stroke="#bdbdbd" stroke-width="1.9" fill="none"/></svg>
<svg style="left:893px;top:207px;" width="9" height="6" viewBox="0 0 9 6"><path d="M1 1L4.4 4.2L7.8 1" fill="none" stroke="#555" stroke-width="1.7"/></svg>
<svg style="left:897px;top:240px;" width="8" height="5" viewBox="0 0 8 5"><path d="M0 4.4H7L3.5 .4Z" fill="#666"/></svg>
<svg style="left:897px;top:751px;" width="8" height="5" viewBox="0 0 8 5"><path d="M0 .6H7L3.5 4.6Z" fill="#666"/></svg>
<svg style="left:581px;top:771px;" width="5" height="8" viewBox="0 0 5 8"><path d="M4.4 0V7L.4 3.5Z" fill="#666"/></svg>
<svg style="left:880px;top:771px;" width="5" height="8" viewBox="0 0 5 8"><path d="M.6 0V7L4.6 3.5Z" fill="#666"/></svg>
<div style="left:559px;top:770px;width:2px;height:2px;background:#b0b0b0;"></div>
<div style="left:559px;top:774px;width:2px;height:2px;background:#b0b0b0;"></div>
<div style="left:559px;top:778px;width:2px;height:2px;background:#b0b0b0;"></div>
<svg style="left:59px;top:770px;" width="5" height="8" viewBox="0 0 5 8"><path d="M4.4 0V7.4L.3 3.7Z" fill="#c2c2c2"/></svg>
<svg style="left:88px;top:770px;" width="5" height="8" viewBox="0 0 5 8"><path d="M.6 0V7.4L4.7 3.7Z" fill="#c2c2c2"/></svg>
<svg style="left:225px;top:766px;" width="17" height="17" viewBox="0 0 17 17"><circle cx="8" cy="7.8" r="7.4" fill="none" stroke="#80958a" stroke-width="1.1"/><path d="M8 3.8V11.8M4 7.8H12" stroke="#5a7a68" stroke-width="1.7"/></svg>
<svg style="left:610px;top:792px;" width="13" height="13" viewBox="0 0 13 13"><rect x=".5" y=".5" width="12" height="12" fill="#fff" stroke="#777"/><path d="M.5 4.5H12.5M.5 8.5H12.5M4.5 .5V12.5M8.5 .5V12.5" stroke="#777"/></svg>
<div style="left:638px;top:789px;width:44px;height:20px;background:#c6c6c6;"></div>
<svg style="left:650px;top:792px;" width="14" height="13" viewBox="0 0 14 13"><rect x=".5" y=".5" width="13" height="12" fill="none" stroke="#686868"/><path d="M1 .5H13" stroke="#5a3a44" stroke-dasharray="1 1"/><rect x="3.5" y="2.5" width="7" height="8" fill="none" stroke="#686868"/><path d="M5 4.6H9M5 6.5H9M5 8.4H9" stroke="#686868" stroke-width=".9"/></svg>
<svg style="left:690px;top:792px;" width="14" height="13" viewBox="0 0 14 13"><rect x=".5" y=".5" width="13" height="12" fill="#f8f8f8" stroke="#777"/><path d="M4.5 .5V7.5M8.5 .5V7.5M.5 7.5H8.5" fill="none" stroke="#777"/></svg>
<div style="left:723px;top:798px;width:8px;height:1px;background:#444;"></div>
<div style="left:736px;top:798px;width:100px;height:1px;background:#8a8a8a;"></div>
<div style="left:784px;top:793px;width:5px;height:12px;background:#666;"></div>
<div style="left:841px;top:798px;width:8px;height:1px;background:#444;"></div>
<div style="left:844.5px;top:794.5px;width:1px;height:8px;background:#444;"></div>
<div style="left:43px;top:316px;width:2px;height:1px;background:#a6a6a6;"></div>
<div style="left:43px;top:325px;width:7px;height:1px;background:#a6a6a6;"></div>
<div style="left:43px;top:334px;width:2px;height:1px;background:#a6a6a6;"></div>
<div style="left:43px;top:344px;width:16px;height:1px;background:#a6a6a6;"></div>
<div style="left:43px;top:354px;width:2px;height:1px;background:#a6a6a6;"></div>
<div style="left:43px;top:363px;width:7px;height:1px;background:#a6a6a6;"></div>
<div style="left:43px;top:372px;width:2px;height:1px;background:#a6a6a6;"></div>
<div style="left:43px;top:393px;width:2px;height:1px;background:#a6a6a6;"></div>
<div style="left:43px;top:403px;width:7px;height:1px;background:#a6a6a6;"></div>
<div style="left:43px;top:412px;width:2px;height:1px;background:#a6a6a6;"></div>
<div style="left:43px;top:422px;width:19px;height:1px;background:#a6a6a6;"></div>
<div style="left:43px;top:432px;width:2px;height:1px;background:#a6a6a6;"></div>
<div style="left:43px;top:441px;width:7px;height:1px;background:#a6a6a6;"></div>
<div style="left:43px;top:451px;width:2px;height:1px;background:#a6a6a6;"></div>
<div style="left:43px;top:461px;width:19px;height:1px;background:#a6a6a6;"></div>
<div style="left:43px;top:470px;width:2px;height:1px;background:#a6a6a6;"></div>
<div style="left:43px;top:480px;width:7px;height:1px;background:#a6a6a6;"></div>
<div style="left:43px;top:489px;width:2px;height:1px;background:#a6a6a6;"></div>
<div style="left:43px;top:499px;width:19px;height:1px;background:#a6a6a6;"></div>
<div style="left:43px;top:509px;width:2px;height:1px;background:#a6a6a6;"></div>
<div style="left:43px;top:518px;width:7px;height:1px;background:#a6a6a6;"></div>
<div style="left:43px;top:528px;width:2px;height:1px;background:#a6a6a6;"></div>
<div style="left:43px;top:538px;width:19px;height:1px;background:#a6a6a6;"></div>
<div style="left:43px;top:547px;width:2px;height:1px;background:#a6a6a6;"></div>
<div style="left:43px;top:557px;width:7px;height:1px;background:#a6a6a6;"></div>
<div style="left:43px;top:567px;width:2px;height:1px;background:#a6a6a6;"></div>
<div style="left:43px;top:576px;width:19px;height:1px;background:#a6a6a6;"></div>
<div style="left:43px;top:586px;width:2px;height:1px;background:#a6a6a6;"></div>
<div style="left:43px;top:596px;width:7px;height:1px;background:#a6a6a6;"></div>
<div style="left:43px;top:605px;width:2px;height:1px;background:#a6a6a6;"></div>
<div style="left:43px;top:615px;width:19px;height:1px;background:#a6a6a6;"></div>
<div style="left:43px;top:624px;width:2px;height:1px;background:#a6a6a6;"></div>
<div style="left:43px;top:634px;width:7px;height:1px;background:#a6a6a6;"></div>
<div style="left:43px;top:644px;width:2px;height:1px;background:#a6a6a6;"></div>
<div style="left:43px;top:653px;width:19px;height:1px;background:#a6a6a6;"></div>
<div style="left:43px;top:663px;width:2px;height:1px;background:#a6a6a6;"></div>
<div style="left:43px;top:673px;width:7px;height:1px;background:#a6a6a6;"></div>
<div style="left:43px;top:682px;width:2px;height:1px;background:#a6a6a6;"></div>
<div style="left:43px;top:692px;width:19px;height:1px;background:#a6a6a6;"></div>
<div style="left:43px;top:702px;width:2px;height:1px;background:#a6a6a6;"></div>
<div style="left:43px;top:711px;width:7px;height:1px;background:#a6a6a6;"></div>
<div style="left:43px;top:721px;width:2px;height:1px;background:#a6a6a6;"></div>
<div style="left:43px;top:730px;width:19px;height:1px;background:#a6a6a6;"></div>
<div style="left:43px;top:740px;width:2px;height:1px;background:#a6a6a6;"></div>
<div style="left:43px;top:750px;width:7px;height:1px;background:#a6a6a6;"></div>
<span class="t" style="left:43px;top:345.5px;width:8px;height:6px;font:9px/8px 'Liberation Sans',sans-serif;color:#444;transform-origin:0 0;transform:translate(0,6px) rotate(-90deg);">1</span>
<span class="t" style="left:43px;top:424.0px;width:8px;height:6px;font:9px/8px 'Liberation Sans',sans-serif;color:#444;transform-origin:0 0;transform:translate(0,6px) rotate(-90deg);">1</span>
<span class="t" style="left:43px;top:462.6px;width:8px;height:6px;font:9px/8px 'Liberation Sans',sans-serif;color:#444;transform-origin:0 0;transform:translate(0,6px) rotate(-90deg);">2</span>
<span class="t" style="left:43px;top:501.1px;width:8px;height:6px;font:9px/8px 'Liberation Sans',sans-serif;color:#444;transform-origin:0 0;transform:translate(0,6px) rotate(-90deg);">3</span>
<span class="t" style="left:43px;top:539.6px;width:8px;height:6px;font:9px/8px 'Liberation Sans',sans-serif;color:#444;transform-origin:0 0;transform:translate(0,6px) rotate(-90deg);">4</span>
<span class="t" style="left:43px;top:578.2px;width:8px;height:6px;font:9px/8px 'Liberation Sans',sans-serif;color:#444;transform-origin:0 0;transform:translate(0,6px) rotate(-90deg);">5</span>
<span class="t" style="left:43px;top:616.8px;width:8px;height:6px;font:9px/8px 'Liberation Sans',sans-serif;color:#444;transform-origin:0 0;transform:translate(0,6px) rotate(-90deg);">6</span>
<span class="t" style="left:43px;top:655.3px;width:8px;height:6px;font:9px/8px 'Liberation Sans',sans-serif;color:#444;transform-origin:0 0;transform:translate(0,6px) rotate(-90deg);">7</span>
<span class="t" style="left:43px;top:693.8px;width:8px;height:6px;font:9px/8px 'Liberation Sans',sans-serif;color:#444;transform-origin:0 0;transform:translate(0,6px) rotate(-90deg);">8</span>
<span class="t" style="left:43px;top:732.4px;width:8px;height:6px;font:9px/8px 'Liberation Sans',sans-serif;color:#444;transform-origin:0 0;transform:translate(0,6px) rotate(-90deg);">9</span>
</div>
<div class="layer ui">
<span class="t" style="left:369.62px;top:38.84px;font:12px/18px &quot;Liberation Sans&quot;, sans-serif;color:#fff;letter-spacing:-0.118px;">Диаграмма в диаграмме.xlsx</span>
<span class="t" style="left:534.30px;top:38.84px;font:12px/18px &quot;Liberation Sans&quot;, sans-serif;color:#fff;">-</span>
<span class="t" style="left:545.15px;top:38.84px;font:12px/18px &quot;Liberation Sans&quot;, sans-serif;color:#fff;letter-spacing:-0.300px;transform:scaleX(0.9869);transform-origin:0 0;">Excel</span>
<span class="t" style="left:680.00px;top:36.84px;font:12px/18px &quot;Liberation Sans&quot;, sans-serif;color:#217346;letter-spacing:-0.300px;transform:scaleX(0.9882);transform-origin:0 0;">Вход</span>
<span class="t" style="left:46.75px;top:69.84px;font:12px/18px &quot;Liberation Sans&quot;, sans-serif;color:#fff;letter-spacing:0.125px;">Файл</span>
<span class="t" style="left:101.83px;top:69.84px;font:12px/18px &quot;Liberation Sans&quot;, sans-serif;color:#fff;letter-spacing:-0.229px;">Главная</span>
<span class="t" style="left:165.57px;top:69.84px;font:12px/18px &quot;Liberation Sans&quot;, sans-serif;color:#fff;letter-spacing:-0.300px;transform:scaleX(0.9830);transform-origin:0 0;">Вставка</span>
<span class="t" style="left:354.75px;top:69.84px;font:12px/18px &quot;Liberation Sans&quot;, sans-serif;color:#fff;letter-spacing:0.375px;">Формулы</span>
<span class="t" style="left:428.83px;top:69.84px;font:12px/18px &quot;Liberation Sans&quot;, sans-serif;color:#fff;letter-spacing:-0.062px;transform:scaleX(1.0098);transform-origin:0 0;">Данные</span>
<span class="t" style="left:491.83px;top:69.84px;font:12px/18px &quot;Liberation Sans&quot;, sans-serif;color:#fff;letter-spacing:-0.072px;">Рецензирование</span>
<span class="t" style="left:601.07px;top:69.84px;font:12px/18px &quot;Liberation Sans&quot;, sans-serif;color:#fff;letter-spacing:-0.300px;transform:scaleX(0.9721);transform-origin:0 0;">Вид</span>
<span class="t" style="left:640.69px;top:69.84px;font:12px/18px &quot;Liberation Sans&quot;, sans-serif;color:#fff;letter-spacing:-0.207px;">Справка</span>
<span class="t" style="left:734.08px;top:69.84px;font:12px/18px &quot;Liberation Sans&quot;, sans-serif;color:#fff;letter-spacing:0.450px;transform:scaleX(1.0168);transform-origin:0 0;">Помощн</span>
<span class="t" style="left:821.83px;top:69.84px;font:12px/18px &quot;Liberation Sans&quot;, sans-serif;color:#fff;letter-spacing:-0.061px;">Поделиться</span>
<span class="t" style="left:227.83px;top:69.84px;font:12px/18px &quot;Liberation Sans&quot;, sans-serif;color:#217346;letter-spacing:-0.104px;">Разметка страницы</span>
<span class="t" style="left:45.80px;top:133.84px;font:12px/18px &quot;Liberation Sans&quot;, sans-serif;color:#181818;">Темы</span>
<span class="t" style="left:62.80px;top:168.84px;font:12px/18px &quot;Liberation Sans&quot;, sans-serif;color:#181818;letter-spacing:-0.300px;transform:scaleX(0.9748);transform-origin:0 0;">Темы</span>
<span class="t" style="left:136.83px;top:133.84px;font:12px/18px &quot;Liberation Sans&quot;, sans-serif;color:#181818;letter-spacing:0.236px;">Поля</span>
<span class="t" style="left:195.25px;top:99.84px;font:12px/18px &quot;Liberation Sans&quot;, sans-serif;color:#181818;letter-spacing:-0.066px;transform:scaleX(0.9950);transform-origin:0 0;">Ориентация</span>
<span class="t" style="left:194.83px;top:122.84px;font:12px/18px &quot;Liberation Sans&quot;, sans-serif;color:#181818;letter-spacing:-0.165px;">Размер</span>
<span class="t" style="left:195.25px;top:145.84px;font:12px/18px &quot;Liberation Sans&quot;, sans-serif;color:#181818;letter-spacing:-0.044px;">Область печати</span>
<span class="t" style="left:318.83px;top:99.84px;font:12px/18px &quot;Liberation Sans&quot;, sans-serif;color:#181818;letter-spacing:-0.111px;">Разрывы</span>
<span class="t" style="left:318.83px;top:122.84px;font:12px/18px &quot;Liberation Sans&quot;, sans-serif;color:#181818;letter-spacing:0.061px;">Подложка</span>
<span class="t" style="left:318.83px;top:145.84px;font:12px/18px &quot;Liberation Sans&quot;, sans-serif;color:#181818;letter-spacing:0.013px;">Печатать заголовки</span>
<span class="t" style="left:215.00px;top:168.84px;font:12px/18px &quot;Liberation Sans&quot;, sans-serif;color:#181818;letter-spacing:-0.191px;">Параметры страницы</span>
<span class="t" style="left:472.00px;top:99.84px;font:12px/18px &quot;Liberation Sans&quot;, sans-serif;color:#181818;letter-spacing:0.308px;">Ширина:</span>
<span class="t" style="left:472.00px;top:122.84px;font:12px/18px &quot;Liberation Sans&quot;, sans-serif;color:#181818;">Высота:</span>
<span class="t" style="left:472.00px;top:145.84px;font:12px/18px &quot;Liberation Sans&quot;, sans-serif;color:#181818;letter-spacing:0.241px;">Масштаб:</span>
<span class="t" style="left:536.11px;top:145.84px;font:12px/18px &quot;Liberation Sans&quot;, sans-serif;color:#181818;letter-spacing:-0.300px;transform:scaleX(0.9466);transform-origin:0 0;">100</span>
<span class="t" style="left:558.17px;top:145.84px;font:12px/18px &quot;Liberation Sans&quot;, sans-serif;color:#181818;transform:scaleX(0.8702);transform-origin:0 0;">%</span>
<span class="t" style="left:500.07px;top:168.84px;font:12px/18px &quot;Liberation Sans&quot;, sans-serif;color:#181818;letter-spacing:-0.300px;transform:scaleX(0.9773);transform-origin:0 0;">Вписать</span>
<span class="t" style="left:623.00px;top:131.84px;font:12px/18px &quot;Liberation Sans&quot;, sans-serif;color:#181818;letter-spacing:0.250px;">Параметры</span>
<span class="t" style="left:636.88px;top:147.84px;font:12px/18px &quot;Liberation Sans&quot;, sans-serif;color:#181818;letter-spacing:-0.187px;transform:scaleX(1.0045);transform-origin:0 0;">листа</span>
<span class="t" style="left:704.78px;top:131.84px;font:12px/18px &quot;Liberation Sans&quot;, sans-serif;color:#181818;letter-spacing:0.110px;">Упорядочение</span>
<span class="t" style="left:39.86px;top:791.19px;font:11px/16px &quot;Liberation Sans&quot;, sans-serif;color:#181818;letter-spacing:0.450px;">Готово</span>
<span class="t" style="left:94.73px;top:791.19px;font:11px/16px &quot;Liberation Sans&quot;, sans-serif;color:#181818;letter-spacing:0.116px;transform:scaleX(1.0061);transform-origin:0 0;">Страница: 1 из 1</span>
<span class="t" style="left:862.06px;top:791.19px;font:11px/16px &quot;Liberation Sans&quot;, sans-serif;color:#181818;letter-spacing:-0.300px;transform:scaleX(1.0118);transform-origin:0 0;">100</span>
<span class="t" style="left:882.54px;top:791.19px;font:11px/16px &quot;Liberation Sans&quot;, sans-serif;color:#181818;transform:scaleX(0.9638);transform-origin:0 0;">%</span>
</div>
<div class="layer">
<div style="left:156px;top:333px;width:116px;height:35px;border:4px solid #ff0000;box-sizing:border-box;border-radius:9px;box-shadow:1px 2px 4px rgba(0,0,0,.6),inset 1px 2px 4px rgba(0,0,0,.6);"></div>
<svg style="left:252.3px;top:349.3px;filter:drop-shadow(1px 2px 2px rgba(0,0,0,.3));" width="46.6" height="46.6" viewBox="0 0 46.6 46.6"><defs><radialGradient id="ga" cx="20%" cy="42%" r="85%"><stop offset="0" stop-color="#fa9c6c"/><stop offset=".45" stop-color="#f8733e"/><stop offset="1" stop-color="#fc4c18"/></radialGradient></defs>
<circle cx="23.3" cy="23.3" r="22.8" fill="url(#ga)" stroke="#b9451d" stroke-width="1"/>
<text x="16.3" y="32.3" style="font-family:NanumGothic,'Liberation Sans',sans-serif;font-weight:bold;font-size:24.7px" stroke-linejoin="miter" fill="#2b1b26" stroke="#2b1b26" stroke-width="4.4">2</text>
<text x="16.3" y="32.3" style="font-family:NanumGothic,'Liberation Sans',sans-serif;font-weight:bold;font-size:24.7px" stroke-linejoin="miter" fill="#fff" stroke="#fff" stroke-width="1.6">2</text></svg>
<div style="left:628.6px;top:784px;width:57px;height:28px;border:4px solid #ff0000;box-sizing:border-box;border-radius:9px;box-shadow:1px 2px 4px rgba(0,0,0,.6),inset 1px 2px 4px rgba(0,0,0,.6);"></div>
<svg style="left:598.25px;top:754.1px;filter:drop-shadow(1px 2px 2px rgba(0,0,0,.3));" width="46.6" height="46.6" viewBox="0 0 46.6 46.6"><defs><radialGradient id="gb" cx="20%" cy="42%" r="85%"><stop offset="0" stop-color="#fa9c6c"/><stop offset=".45" stop-color="#f8733e"/><stop offset="1" stop-color="#fc4c18"/></radialGradient></defs>
<circle cx="23.3" cy="23.3" r="22.8" fill="url(#gb)" stroke="#b9451d" stroke-width="1"/>
<text x="16.5" y="32.5" style="font-family:NanumGothic,'Liberation Sans',sans-serif;font-weight:bold;font-size:24.7px" stroke-linejoin="miter" fill="#2b1b26" stroke="#2b1b26" stroke-width="4.4">1</text>
<text x="16.5" y="32.5" style="font-family:NanumGothic,'Liberation Sans',sans-serif;font-weight:bold;font-size:24.7px" stroke-linejoin="miter" fill="#fff" stroke="#fff" stroke-width="1.6">1</text></svg>
</div>
</div>
</body>
</html>
